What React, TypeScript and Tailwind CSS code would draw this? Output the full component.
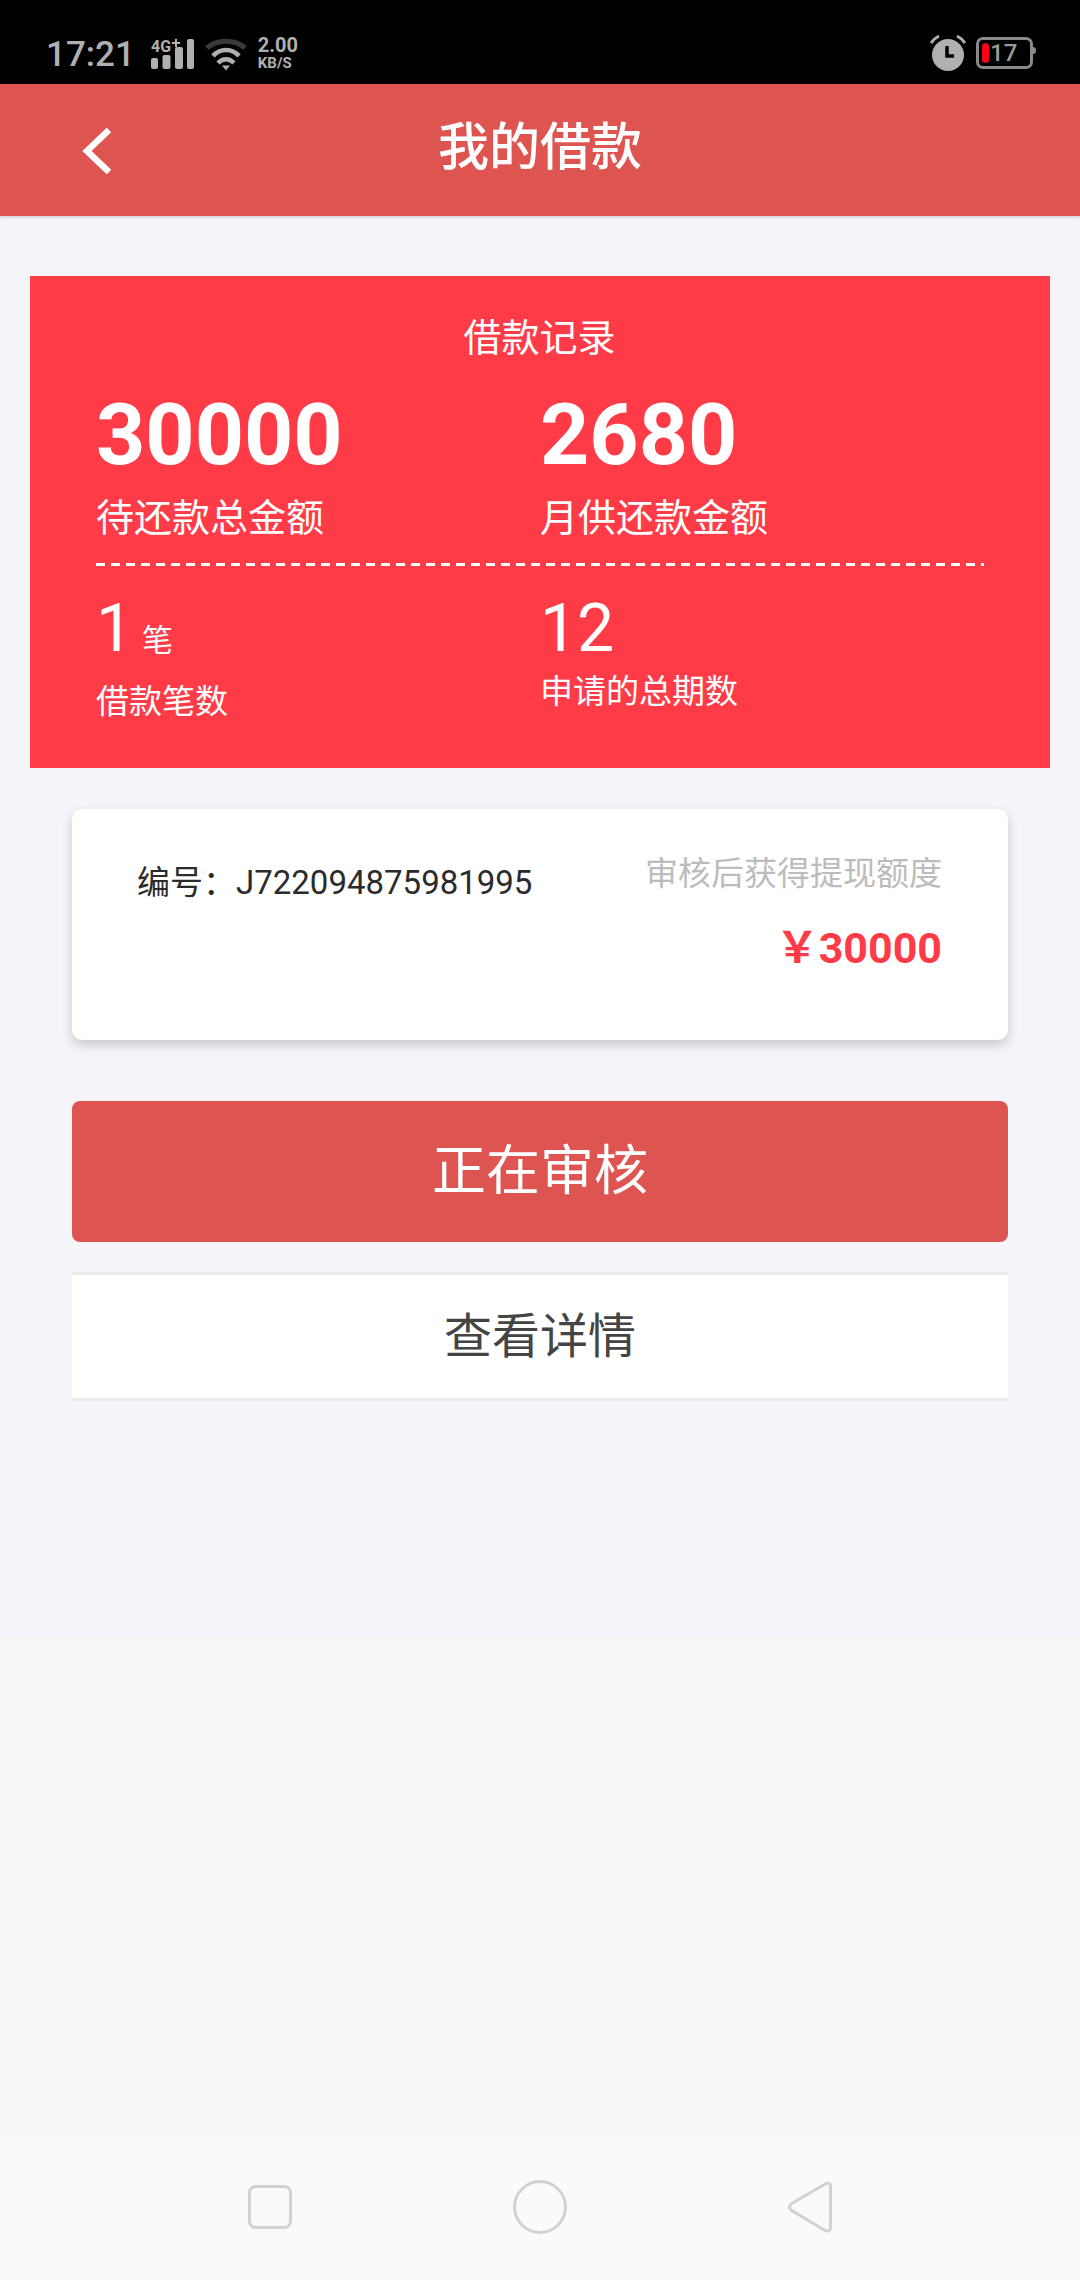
const FONT = "font-['Roboto','Noto_Sans_CJK_SC',sans-serif]"

function StatusBar() {
  return (
    <div className="flex h-[84px] shrink-0 items-start justify-between bg-black pl-[46px] pr-[47px] pt-[34px] text-[#b0b0b0]">
      <div className="flex items-start">
        <span className="text-[35px] font-medium leading-[42px]">17:21</span>
        <svg className="ml-[16px]" width="44" height="36" viewBox="0 0 44 36" fill="#b0b0b0">
          <text x="0" y="18" fontSize="17" fontWeight="700" fontFamily="Roboto" textLength={20} lengthAdjust="spacingAndGlyphs">4G</text>
          <path d="M24 5h2v3h3v2h-3v3h-2v-3h-3v-2h3z" />
          <rect x="0" y="24" width="7" height="11" rx="2" />
          <rect x="11.500" y="21" width="8" height="14" rx="2" />
          <rect x="24" y="13" width="8" height="22" rx="2" />
          <rect x="36" y="5" width="7" height="30" rx="2" />
        </svg>
        <svg className="ml-[10px] mt-[4px]" width="42" height="33" viewBox="0 0 42 33" fill="none">
          <path d="M2 10C12 1 30 1 40 10" stroke="#3a3a3a" strokeWidth="5" />
          <path d="M8 18C15 10 27 10 34 18" stroke="#b0b0b0" strokeWidth="4.500" />
          <path d="M13 25C18 20 24 20 29 25" stroke="#b0b0b0" strokeWidth="4.500" />
          <path d="M17 27.500h8l-4 5z" fill="#b0b0b0" />
        </svg>
        <div className="ml-[11px] mt-[1px] flex flex-col font-bold">
          <span className="text-[20px] leading-[20px]">2.00</span>
          <span className="text-[15px] leading-[17px]">KB/S</span>
        </div>
      </div>
      <div className="flex items-start">
        <svg width="38" height="37" viewBox="0 0 38 37" fill="none">
          <circle cx="19" cy="21" r="16" fill="#b0b0b0" />
          <path d="M2 9C4 6 6 4 10 2M36 9C34 6 32 4 28 2" stroke="#b0b0b0" strokeWidth="3" />
          <path d="M18 12v10h7" stroke="#000" strokeWidth="3.500" />
        </svg>
        <div className="relative ml-[9px] mt-[3px] h-[32px] w-[57px] rounded-[7px] border-[3px] border-[#8a8a8a]">
          <div className="absolute left-[3px] top-[3px] h-[20px] w-[7px] rounded-[4px] bg-[#ff0019]" />
          <span className="absolute left-[11px] top-[1px] text-[24px] font-medium leading-[24px] text-[#9a9a9a]">17</span>
          <div className="absolute -right-[6px] top-[7px] h-[7px] w-[3px] rounded-r-full bg-[#8a8a8a]" />
        </div>
      </div>
    </div>
  )
}

function NavBar() {
  return (
    <div className="flex h-[144px] shrink-0 items-center justify-center gap-[221px] bg-[#fafafa] pb-[2px]">
      <svg width="44" height="44" viewBox="0 0 44 44" fill="none">
        <rect x="1.500" y="1.500" width="41" height="41" rx="6" stroke="#d2d2d2" strokeWidth="3" />
      </svg>
      <svg width="54" height="54" viewBox="0 0 54 54" fill="none">
        <circle cx="27" cy="27" r="25.500" stroke="#d2d2d2" strokeWidth="3" />
      </svg>
      <svg width="44" height="52" viewBox="0 0 44 52" fill="none">
        <path d="M38 2.500 3 23Q0 26 3 29L38 50Q42.500 50.500 42.500 47V5Q42.500 1.500 38 2.500Z" stroke="#d2d2d2" strokeWidth="3" />
      </svg>
    </div>
  )
}

export default function App() {
  return (
    <div className={`${FONT} flex h-[2280px] w-[1080px] flex-col overflow-hidden bg-[#f6f6f6]`}>
      <StatusBar />
      <header className="z-10 grid h-[132px] shrink-0 grid-cols-[1fr_auto_1fr] items-center bg-[#dd5450] shadow-[0_1px_3px_rgba(0,0,0,0.18)]">
        <svg className="ml-[82px] mt-[2px]" width="30" height="46" viewBox="0 0 30 46" fill="none">
          <path d="M27 2 5 23 27 44" stroke="#fff" strokeWidth="6.500" />
        </svg>
        <h1 className="pb-[4px] text-[51px] font-medium leading-[60px] text-white">我的借款</h1>
      </header>

      <main className="h-[1422px] shrink-0 bg-[#f4f4f9] pt-[60px]">
        <section className="mx-[30px] h-[492px] bg-[#ff3b47] pl-[66px] pr-[67px] pt-[37px] text-white">
          <p className="text-center text-[38px] leading-[50px]">借款记录</p>
          <div className="mt-[23px] grid grid-cols-[444px_1fr]">
            <div>
              <p className="text-[86px] font-bold leading-[98px]">30000</p>
              <p className="mt-[8px] text-[38px] leading-[52px]">待还款总金额</p>
            </div>
            <div>
              <p className="text-[86px] font-bold leading-[98px]">2680</p>
              <p className="mt-[8px] text-[38px] leading-[52px]">月供还款金额</p>
            </div>
          </div>
          <div className="mr-[-1px] mt-[19px] h-[3px] bg-[repeating-linear-gradient(90deg,#fff_0_9px,transparent_9px_15px)]" />
          <div className="mt-[24px] grid grid-cols-[444px_1fr]">
            <div>
              <p className="text-[66px] leading-[78px]">
                1<span className="ml-[9px] text-[31px] leading-none">笔</span>
              </p>
              <p className="mt-[11px] text-[33px] leading-[46px]">借款笔数</p>
            </div>
            <div>
              <p className="text-[66px] leading-[78px]">12</p>
              <p className="mt-[1px] text-[33px] leading-[46px]">申请的总期数</p>
            </div>
          </div>
        </section>

        <section className="mx-[72px] mt-[41px] flex h-[231px] justify-between rounded-[10px] bg-white pl-[65px] pr-[66px] shadow-[0_5px_12px_rgba(0,0,0,0.18)]">
          <p className="mt-[52px] text-[33px] leading-[44px] text-[#2b2b2b]">编号：J722094875981995</p>
          <div className="mt-[42px] text-right">
            <p className="text-[33px] leading-[46px] text-[#bcbcbc]">审核后获得提现额度</p>
            <p className="mt-[26px] text-[43px] font-bold leading-[50px] text-[#ff3b47]">￥30000</p>
          </div>
        </section>

        <button className="mx-[72px] mt-[61px] flex h-[141px] w-[936px] items-center justify-center rounded-[8px] bg-[#dd5450] text-[54px] text-white">
          正在审核
        </button>

        <button className="mx-[72px] mt-[30px] flex h-[129px] w-[936px] items-center justify-center border-y-[3px] border-[#e9e9e9] bg-white text-[48px] text-[#444]">
          查看详情
        </button>
      </main>

      <div className="flex-1" />
      <NavBar />
    </div>
  )
}
